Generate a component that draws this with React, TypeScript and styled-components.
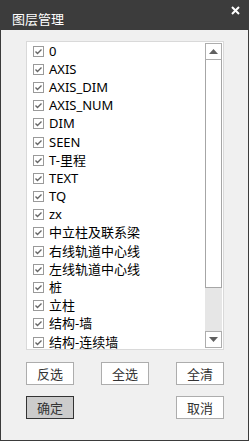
import React from "react";
import styled, { createGlobalStyle } from "styled-components";

const Global = createGlobalStyle`
  html, body { margin: 0; padding: 0; background: #f0f0f0; }
  * { box-sizing: border-box; }
`;

const Window = styled.div`
  width: 249px;
  height: 441px;
  display: flex;
  flex-direction: column;
  background: #f0f0f0;
  border: 1px solid #3b3b3b;
  border-top: none;
  font-family: "Noto Sans", "Noto Sans CJK SC", sans-serif;
`;

const TitleBar = styled.div`
  height: 30px;
  margin: 0 -1px;
  background: #3c3c3c;
  display: flex;
  align-items: flex-start;
  justify-content: space-between;
  padding: 10px 9px 0 12px;
`;

const Title = styled.span`
  color: #ffffff;
  font-size: 13px;
  line-height: 17px;
  font-family: "Noto Sans CJK SC", sans-serif;
`;

const CloseIcon = styled.svg`
  width: 9px;
  height: 9px;
  margin-top: -4px;
`;

const Body = styled.div`
  flex: 1;
  padding: 11px 24px 0 25px;
  display: flex;
  flex-direction: column;
`;

const ListBox = styled.div`
  height: 309px;
  border: 1px solid #d9d9d9;
  background: #ffffff;
  display: flex;
  overflow: hidden;
`;

const Items = styled.div`
  flex: 1;
  padding-left: 6px;
  overflow: hidden;
`;

const Row = styled.div`
  height: 18.2px;
  line-height: 17px;
  display: flex;
  align-items: center;
  gap: 5px;
  font-size: 13px;
  color: #000;
  white-space: nowrap;
`;

const Box = styled.svg`
  width: 11px;
  height: 11px;
  flex: none;
`;

const ScrollBar = styled.div`
  width: 17px;
  margin: 1px 1px 1px 0;
  display: flex;
  flex-direction: column;
  background: #e6e6e6;
`;

const ArrowBtn = styled.div`
  height: 17px;
  border: 1px solid #adadad;
  background: #ffffff;
  display: flex;
  align-items: center;
  justify-content: center;
`;

const Thumb = styled.div<{ $h: number }>`
  height: ${(p) => p.$h}px;
  border: 1px solid #a6a6a6;
  border-top: none;
  background: #ffffff;
`;

const Track = styled.div`
  flex: 1;
`;

const ButtonRow = styled.div<{ $top: number }>`
  display: flex;
  justify-content: space-between;
  margin-top: ${(p) => p.$top}px;
`;

const Btn = styled.button<{ $primary?: boolean }>`
  width: 48px;
  height: 23px;
  padding: 0;
  border: 1px solid ${(p) => (p.$primary ? "#333333" : "#adadad")};
  background: ${(p) => (p.$primary ? "#cccccc" : "#ffffff")};
  color: #333333;
  font-size: 13px;
  font-family: "Noto Sans CJK SC", sans-serif;
  line-height: 1;
`;

const items = [
  "0",
  "AXIS",
  "AXIS_DIM",
  "AXIS_NUM",
  "DIM",
  "SEEN",
  "T-里程",
  "TEXT",
  "TQ",
  "zx",
  "中立柱及联系梁",
  "右线轨道中心线",
  "左线轨道中心线",
  "桩",
  "立柱",
  "结构-墙",
  "结构-连续墙",
];

const Check = () => (
  <Box viewBox="0 0 11 11">
    <rect x="0.5" y="0.5" width="10" height="10" fill="#fff" stroke="#9a9a9a" />
    <path d="M2.5 5.5 L4.5 7.5 L8.5 3.5" fill="none" stroke="#666" strokeWidth="1.4" />
  </Box>
);

export default function App() {
  return (
    <>
      <Global />
      <Window>
        <TitleBar>
          <Title>图层管理</Title>
          <CloseIcon viewBox="0 0 9 9">
            <path d="M1 1 L8 8 M8 1 L1 8" stroke="#fff" strokeWidth="2" />
          </CloseIcon>
        </TitleBar>
        <Body>
          <ListBox>
            <Items>
              {items.map((t) => (
                <Row key={t}>
                  <Check />
                  <span>{t}</span>
                </Row>
              ))}
            </Items>
            <ScrollBar>
              <ArrowBtn>
                <svg width="9" height="5" viewBox="0 0 9 5">
                  <path d="M4.5 0 L9 5 L0 5 Z" fill="#606060" />
                </svg>
              </ArrowBtn>
              <Thumb $h={228} />
              <Track />
              <ArrowBtn>
                <svg width="9" height="5" viewBox="0 0 9 5">
                  <path d="M0 0 L9 0 L4.5 5 Z" fill="#606060" />
                </svg>
              </ArrowBtn>
            </ScrollBar>
          </ListBox>
          <ButtonRow $top={12}>
            <Btn>反选</Btn>
            <Btn>全选</Btn>
            <Btn>全清</Btn>
          </ButtonRow>
          <ButtonRow $top={11}>
            <Btn $primary>确定</Btn>
            <Btn>取消</Btn>
          </ButtonRow>
        </Body>
      </Window>
    </>
  );
}
